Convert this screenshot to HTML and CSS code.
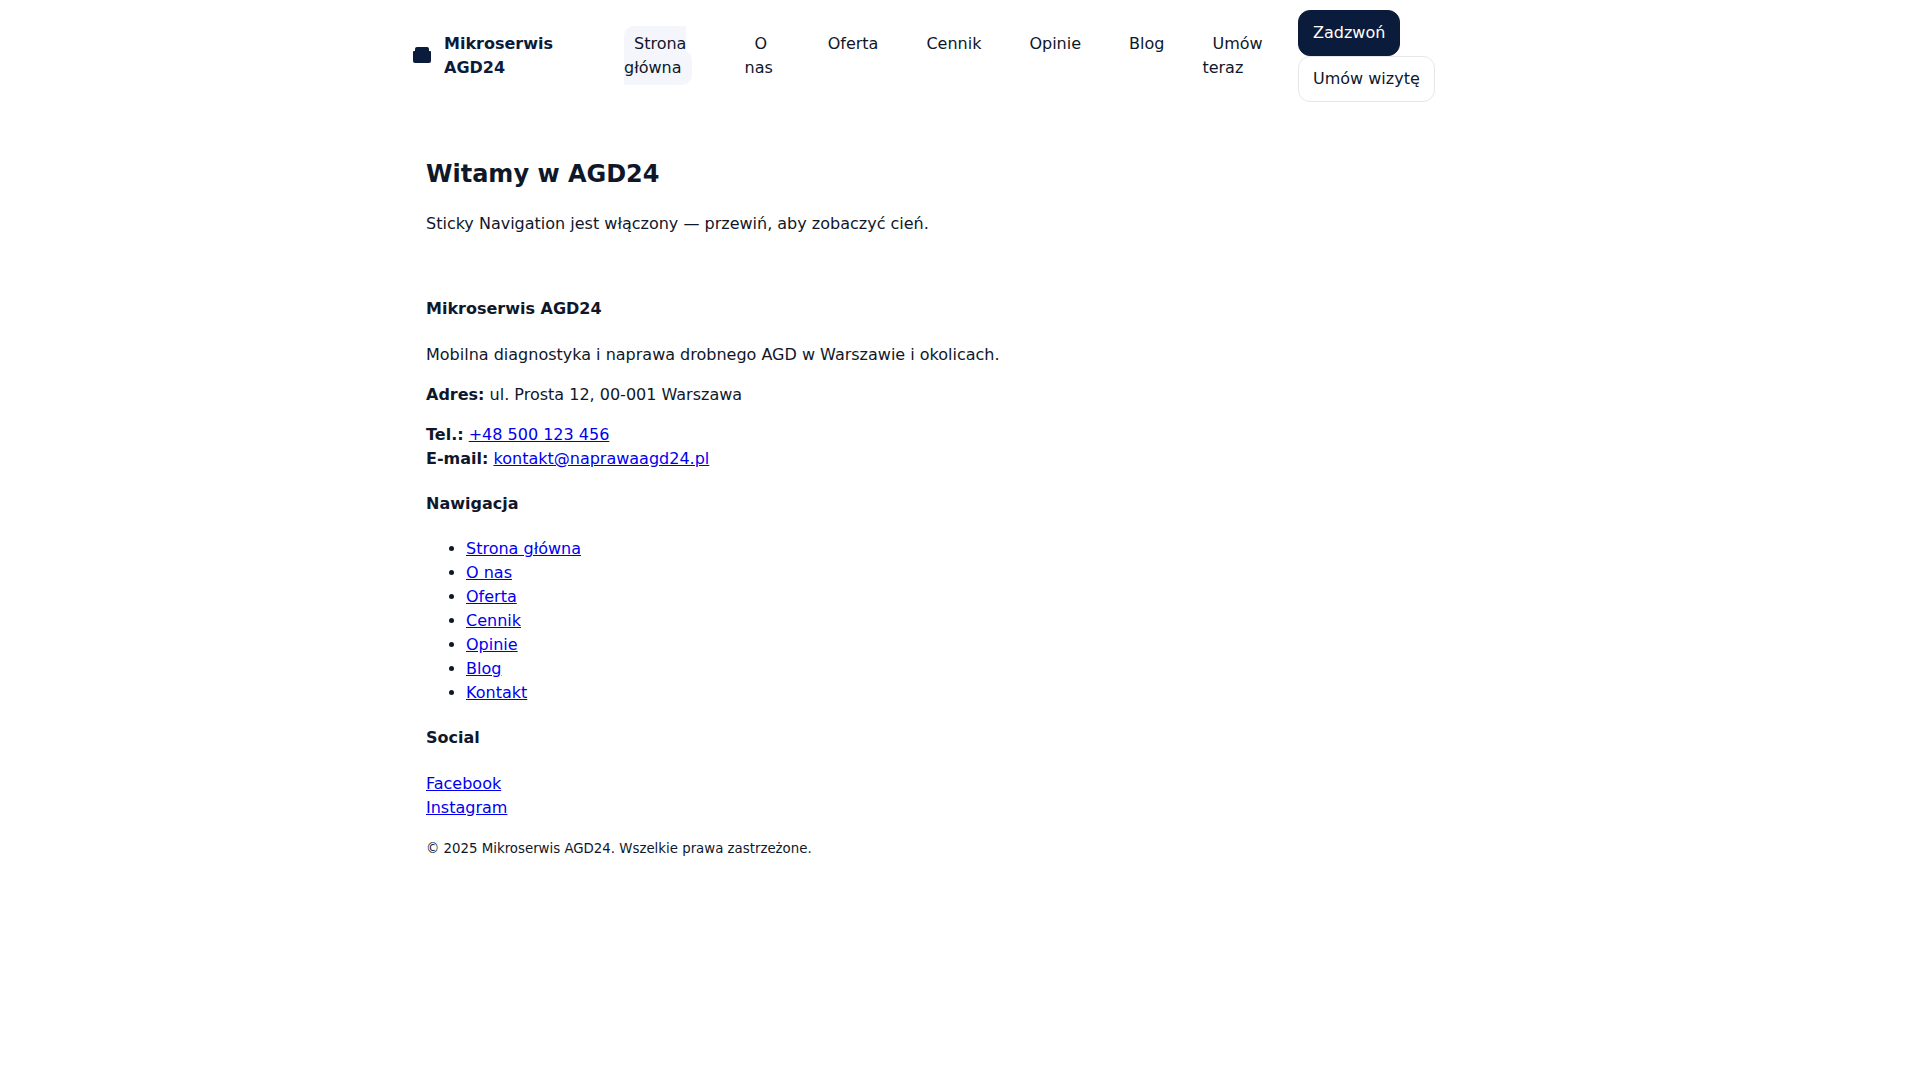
FILE: index.html
```html
<!DOCTYPE html>
<html lang="pl">
<head>
    <meta charset="UTF-8">
    <meta name="viewport" content="width=device-width, initial-scale=1">
    <title>Mikroserwis AGD24</title>
    <link rel="stylesheet" href="styles.css">
</head>
<body>
    <header class="site-header">
        <div class="container header-inner">
            <a class="brand" href="#">
                <svg class="brand-icon" width="24" height="24" viewBox="0 0 24 24" fill="currentColor" aria-hidden="true">
                    <path d="M7 3h10a2 2 0 0 1 2 2v2h1a1 1 0 0 1 1 1v9a2 2 0 0 1-2 2H5a2 2 0 0 1-2-2V8a1 1 0 0 1 1-1h1V5a2 2 0 0 1 2-2z"/>
                </svg>
                <span>Mikroserwis AGD24</span>
            </a>
            <nav class="nav">
                <ul class="nav-list">
                    <li><a class="active" href="#">Strona główna</a></li>
                    <li><a href="#">O nas</a></li>
                    <li><a href="#">Oferta</a></li>
                    <li><a href="#">Cennik</a></li>
                    <li><a href="#">Opinie</a></li>
                    <li><a href="#">Blog</a></li>
                    <li><a href="#">Umów teraz</a></li>
                </ul>
            </nav>
            <div class="cta">
                <a class="btn btn-primary" href="tel:+48500123456">Zadzwoń</a>
                <a class="btn" href="#">Umów wizytę</a>
            </div>
        </div>
    </header>

    <main class="container content">
        <h2>Witamy w AGD24</h2>
        <p>Sticky Navigation jest włączony — przewiń, aby zobaczyć cień.</p>
    </main>

    <footer class="container footer">
        <h4>Mikroserwis AGD24</h4>
        <p>Mobilna diagnostyka i naprawa drobnego AGD w Warszawie i okolicach.</p>
        <p><strong>Adres:</strong> ul. Prosta 12, 00-001 Warszawa</p>
        <p>
            <strong>Tel.:</strong> <a href="tel:+48500123456">+48 500 123 456</a><br>
            <strong>E-mail:</strong> <a href="mailto:kontakt@naprawaagd24.pl">kontakt@naprawaagd24.pl</a>
        </p>

        <h4>Nawigacja</h4>
        <ul>
            <li><a href="#">Strona główna</a></li>
            <li><a href="#">O nas</a></li>
            <li><a href="#">Oferta</a></li>
            <li><a href="#">Cennik</a></li>
            <li><a href="#">Opinie</a></li>
            <li><a href="#">Blog</a></li>
            <li><a href="#">Kontakt</a></li>
        </ul>

        <h4>Social</h4>
        <p>
            <a href="#">Facebook</a><br>
            <a href="#">Instagram</a>
        </p>
        <p><small>© 2025 Mikroserwis AGD24. Wszelkie prawa zastrzeżone.</small></p>
    </footer>
</body>
</html>
```
FILE: styles.css
```css
* {
    box-sizing: border-box;
}
body {
    margin: 0;
    background: #fff;
    color: #0f172a;
    font-family: "DejaVu Sans", sans-serif;
    font-size: 16px;
    line-height: 24px;
}
a:link {
    color: #0000ee;
}
.container {
    max-width: 1100px;
    margin: 0 auto;
}

/* header */
.site-header {
    position: sticky;
    top: 0;
    background: #fff;
}
.header-inner {
    display: flex;
    align-items: center;
    gap: 16px;
    padding: 10px 0;
}
.brand {
    display: flex;
    align-items: center;
    gap: 10px;
    margin-right: 16px;
    font-weight: 700;
    text-decoration: none;
}
.brand:link {
    color: #0b1b3b;
}
.brand-icon {
    flex-shrink: 0;
}
.nav-list {
    display: flex;
    gap: 28px;
    margin: 0;
    padding: 0;
    list-style: none;
}
.nav-list a {
    padding: 8px 10px;
    border-radius: 10px;
    color: #0f172a;
    text-decoration: none;
}
.nav-list .active {
    background: #f5f6fb;
}
.btn {
    display: inline-block;
    padding: 10px 14px;
    border: 1px solid #e5e7eb;
    border-radius: 12px;
    text-decoration: none;
}
.btn:link {
    color: #0f172a;
}
.btn-primary {
    background: #0b1b3b;
    border-color: #0b1b3b;
}
.btn-primary:link {
    color: #fff;
}

/* content */
.content {
    padding: 24px 16px;
}
.content h2 {
    margin: 20px 0;
    font-size: 24px;
    line-height: 36px;
}
.content p {
    margin: 16px 0;
}
.footer {
    padding: 0 16px;
}
```
